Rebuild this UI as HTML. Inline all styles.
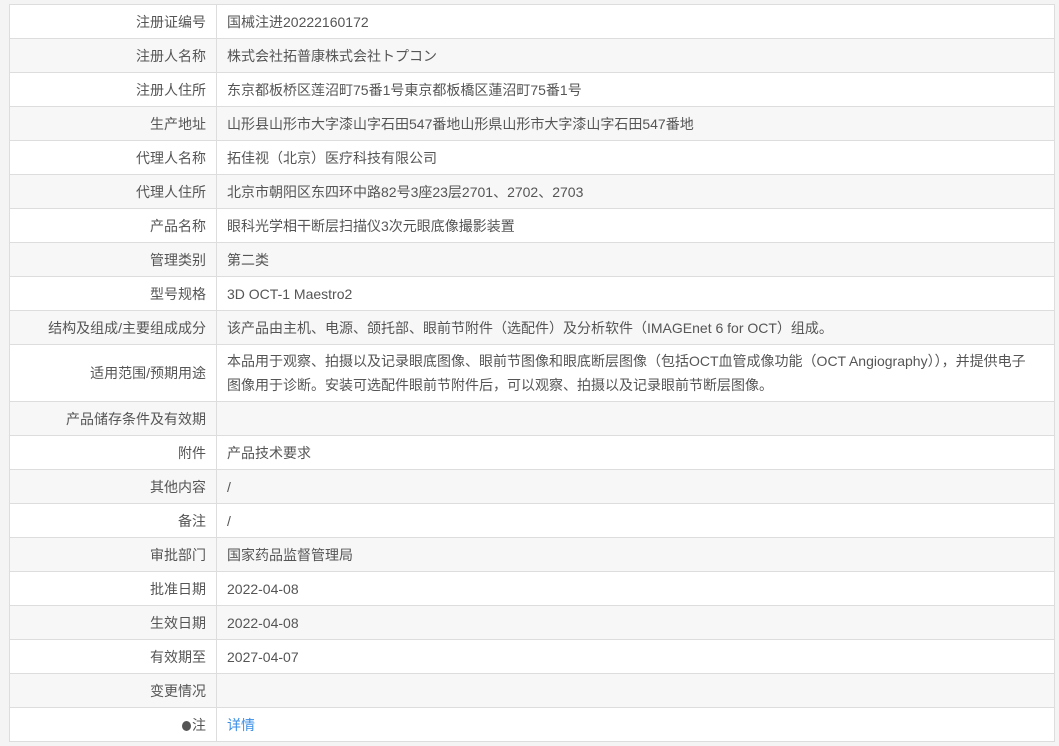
<!DOCTYPE html>
<html><head><meta charset="utf-8"><style>
html,body{margin:0;padding:0;background:#f4f4f4;width:1059px;height:746px;overflow:hidden}
table{position:absolute;left:9px;top:4px;width:1046px;border-collapse:collapse;background:#fff;font-family:"Liberation Sans","Noto Sans CJK SC",sans-serif;font-size:14px;color:#555}
td{border:1px solid #ddd;height:34px;padding:0 10px;line-height:24px;box-sizing:border-box}
td.l{width:207px;text-align:right}
tr:nth-child(even) td{background:#f7f7f7}
a{color:#3a8ee6;text-decoration:none}
.dot{display:inline-block;width:9px;height:10px;border-radius:50%;background:#555;vertical-align:-1px;margin-right:1px}
</style></head><body>
<table>
<tr><td class="l">注册证编号</td><td>国械注进20222160172</td></tr>
<tr><td class="l">注册人名称</td><td>株式会社拓普康株式会社トプコン</td></tr>
<tr><td class="l">注册人住所</td><td>东京都板桥区莲沼町75番1号東京都板橋区蓮沼町75番1号</td></tr>
<tr><td class="l">生产地址</td><td>山形县山形市大字漆山字石田547番地山形県山形市大字漆山字石田547番地</td></tr>
<tr><td class="l">代理人名称</td><td>拓佳视（北京）医疗科技有限公司</td></tr>
<tr><td class="l">代理人住所</td><td>北京市朝阳区东四环中路82号3座23层2701、2702、2703</td></tr>
<tr><td class="l">产品名称</td><td>眼科光学相干断层扫描仪3次元眼底像撮影装置</td></tr>
<tr><td class="l">管理类别</td><td>第二类</td></tr>
<tr><td class="l">型号规格</td><td>3D OCT-1 Maestro2</td></tr>
<tr><td class="l">结构及组成/主要组成成分</td><td>该产品由主机、电源、颌托部、眼前节附件（选配件）及分析软件（IMAGEnet 6 for OCT）组成。</td></tr>
<tr><td class="l" style="height:57px">适用范围/预期用途</td><td>本品用于观察、拍摄以及记录眼底图像、眼前节图像和眼底断层图像（包括OCT血管成像功能（OCT Angiography）），并提供电子<br>图像用于诊断。安装可选配件眼前节附件后，可以观察、拍摄以及记录眼前节断层图像。</td></tr>
<tr><td class="l">产品储存条件及有效期</td><td></td></tr>
<tr><td class="l">附件</td><td>产品技术要求</td></tr>
<tr><td class="l">其他内容</td><td>/</td></tr>
<tr><td class="l">备注</td><td>/</td></tr>
<tr><td class="l">审批部门</td><td>国家药品监督管理局</td></tr>
<tr><td class="l">批准日期</td><td>2022-04-08</td></tr>
<tr><td class="l">生效日期</td><td>2022-04-08</td></tr>
<tr><td class="l">有效期至</td><td>2027-04-07</td></tr>
<tr><td class="l">变更情况</td><td></td></tr>
<tr><td class="l"><span class="dot"></span>注</td><td><a>详情</a></td></tr>
</table>
</body></html>
